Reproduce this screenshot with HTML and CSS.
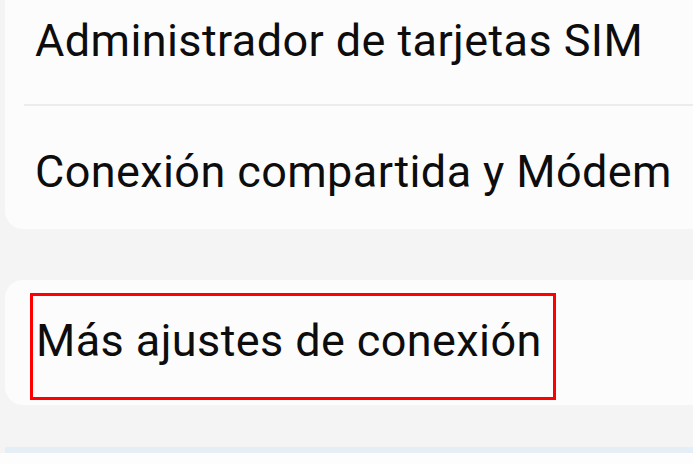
FILE: index.html
```html
<!DOCTYPE html>
<html lang="es">
<head>
<meta charset="utf-8">
<link rel="stylesheet" href="styles.css">
<title>Ajustes</title>
</head>
<body>
<div class="screen">
  <section class="card card-top">
    <div class="row row-first"><span class="label">Administrador de tarjetas SIM</span></div>
    <div class="divider"></div>
    <div class="row row-second"><span class="label">Conexión compartida y Módem</span></div>
  </section>
  <section class="card card-bottom">
    <div class="highlight"><span class="label">Más ajustes de conexión</span></div>
  </section>
  <div class="bottom-bar"></div>
  <div class="bottom-fill"></div>
</div>
</body>
</html>
```

FILE: styles.css
```css
html, body {
  margin: 0;
  padding: 0;
}
body {
  background: #f4f4f4;
  font-family: Roboto, "Liberation Sans", sans-serif;
  color: #0d0d0d;
  width: 693px;
  height: 464px;
  overflow: hidden;
}
.screen {
  display: flex;
  flex-direction: column;
  height: 464px;
}
.card {
  background: #fcfcfc;
  margin-left: 5px;
}
.card-top {
  height: 229px;
  border-radius: 0 0 0 18px;
}
.label {
  font-size: 45px;
  line-height: 52px;
  letter-spacing: 0.4px;
  white-space: nowrap;
  display: block;
}
.row-first {
  height: 104px;
  padding-left: 30px;
  padding-top: 15px;
  box-sizing: border-box;
}
.divider {
  height: 2px;
  margin-left: 19px;
  background: #ececec;
}
.row-second {
  padding-left: 30px;
  padding-top: 40px;
}
.card-bottom {
  margin-top: 51px;
  height: 125px;
  border-radius: 18px 0 0 18px;
  padding-top: 13px;
  box-sizing: border-box;
}
.highlight {
  margin-left: 25px;
  width: 526px;
  height: 107px;
  box-sizing: border-box;
  border: 3px solid #ff0000;
  padding: 19px 0 0 3px;
}
.bottom-bar {
  margin-top: 42px;
  height: 6px;
  margin-left: 5px;
  background: #e5edf5;
}
.bottom-fill {
  flex: 1;
  background: #fdfdfd;
}
```
